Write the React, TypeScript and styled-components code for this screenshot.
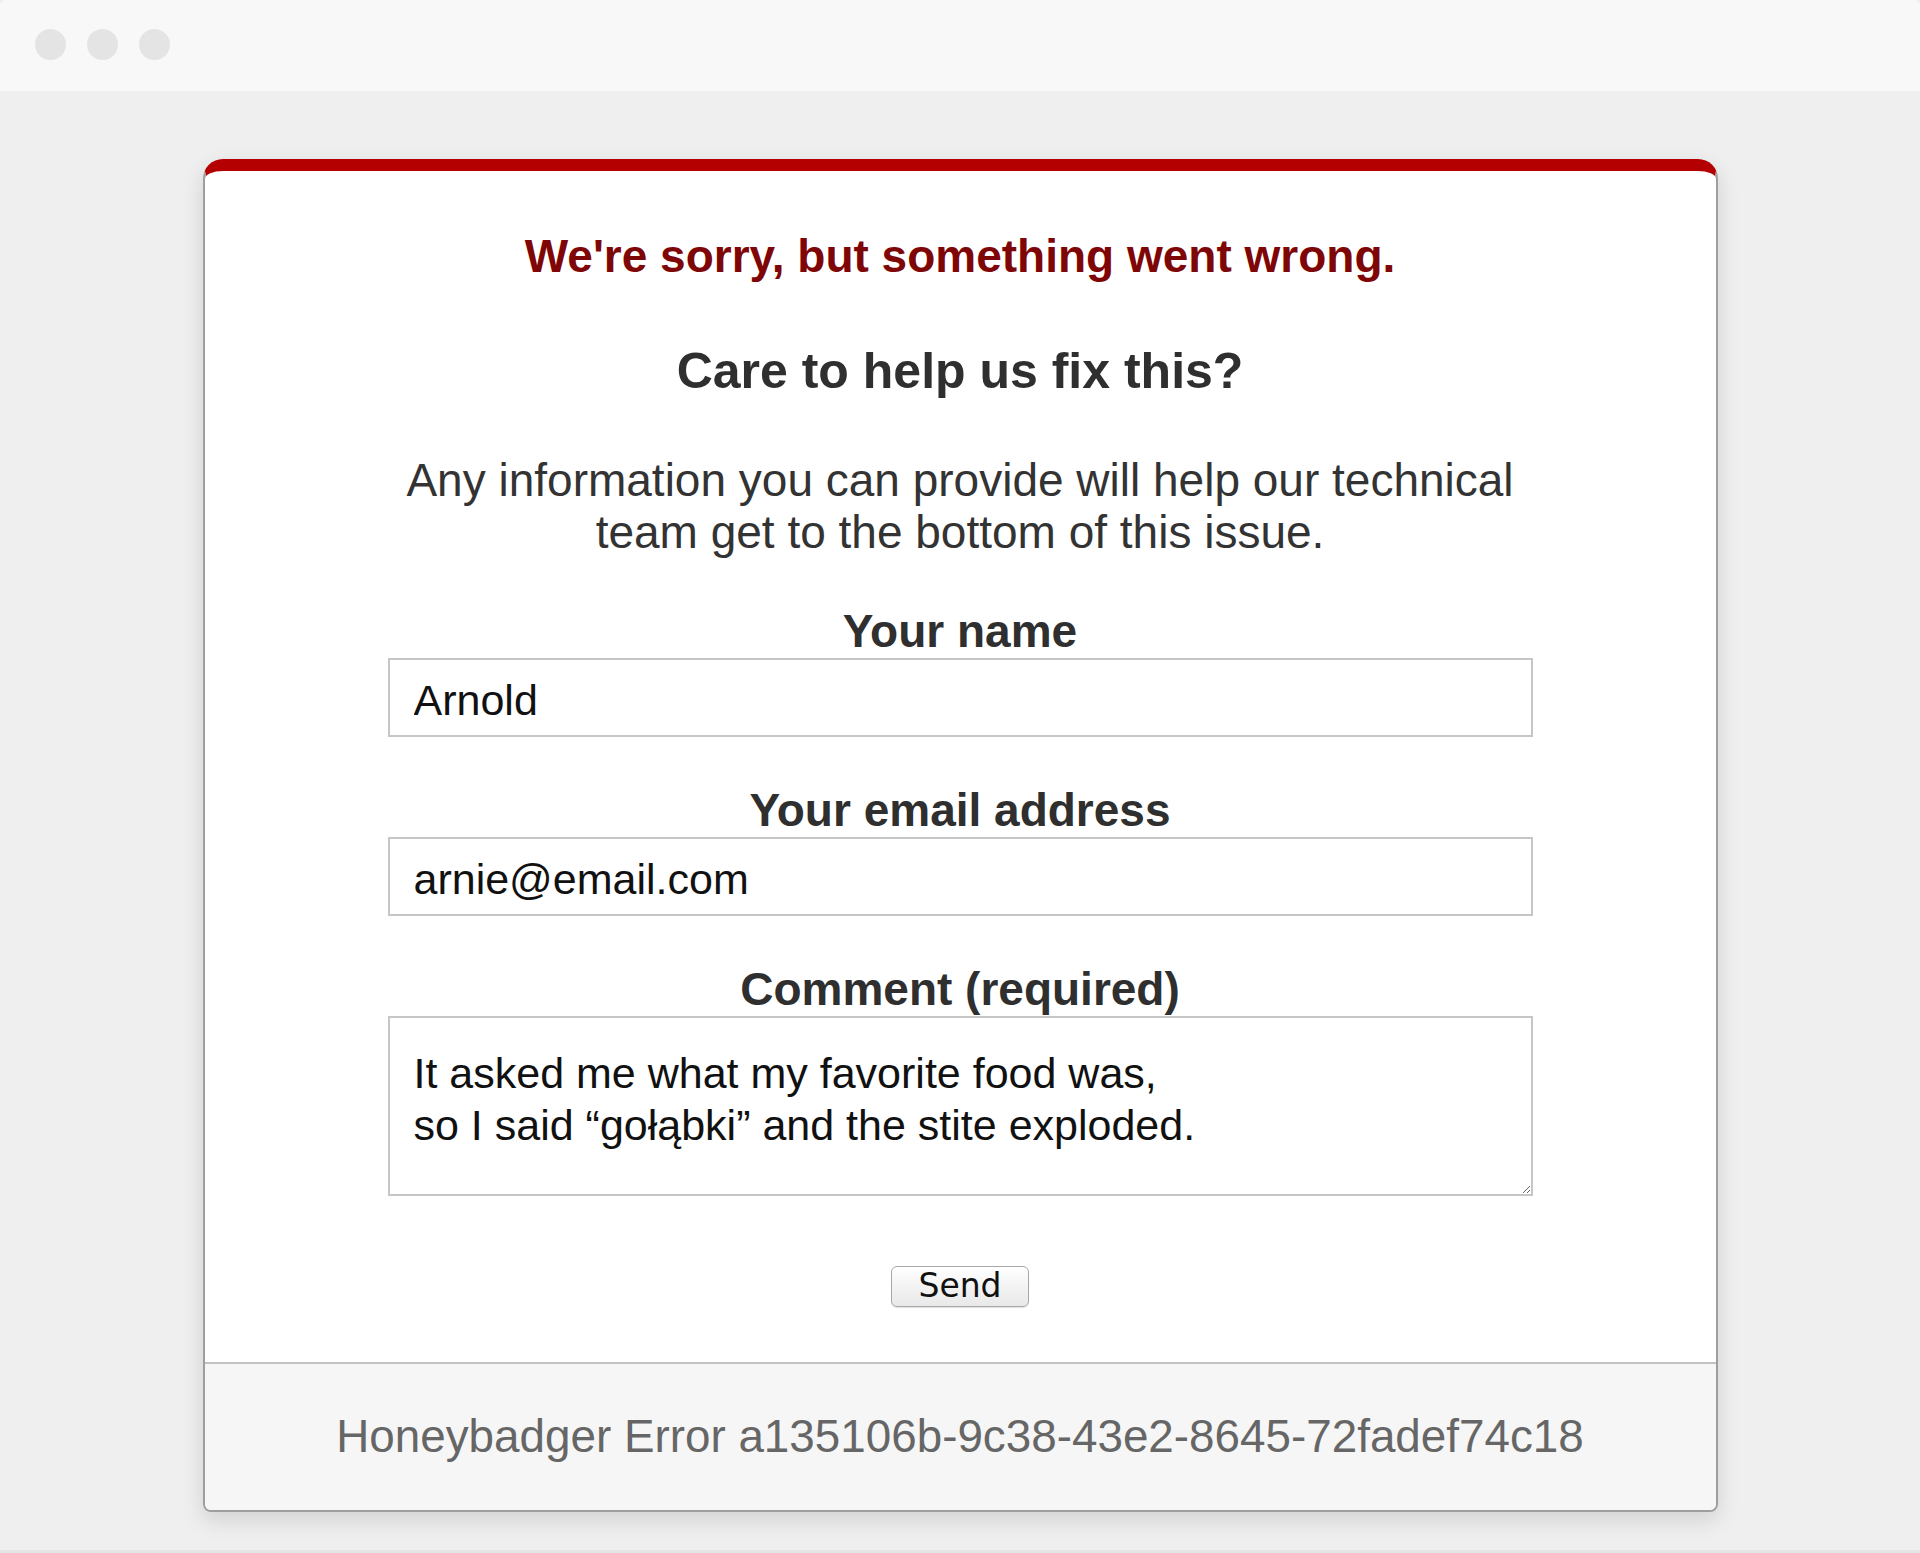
import React from "react";
import styled, { createGlobalStyle } from "styled-components";

const GlobalStyle = createGlobalStyle`
  html, body {
    margin: 0;
    padding: 0;
    background: #efefef;
  }
  * { box-sizing: border-box; }
`;

const Window = styled.div`
  min-height: 1553px;
  display: flex;
  flex-direction: column;
  font-family: "Liberation Sans", Arial, Helvetica, sans-serif;
`;

const TitleBar = styled.div`
  height: 91px;
  background: #f8f8f8;
  border-radius: 6px 6px 0 0;
  display: flex;
  align-items: center;
  gap: 21px;
  padding: 0 0 2px 35px;
`;

const Dot = styled.span`
  width: 31px;
  height: 31px;
  border-radius: 50%;
  background: #e4e4e4;
`;

const Viewport = styled.div`
  flex: 1;
  background: #efefef;
  padding: 68px 0 38px;
  border-bottom: 4px solid #e5e5e5;
`;

const Card = styled.div`
  width: 1515px;
  margin: 0 auto;
  background: #fff;
  border: 2px solid #9e9e9e;
  border-top: 12px solid #b40000;
  border-radius: 20px 20px 8px 8px;
  box-shadow: 0 8px 22px rgba(0, 0, 0, 0.13);
  overflow: hidden;
`;

const Body = styled.div`
  padding: 59px 0 55px;
  display: flex;
  flex-direction: column;
  align-items: center;
  text-align: center;
`;

const Title = styled.h1`
  margin: 0;
  font-size: 46px;
  line-height: 52px;
  font-weight: bold;
  color: #7f0606;
`;

const Subtitle = styled.h2`
  margin: 60.5px 0 0;
  font-size: 50px;
  line-height: 56px;
  font-weight: bold;
  color: #2f2f2f;
`;

const Lead = styled.p`
  margin: 55px 0 0;
  width: 1145px;
  font-size: 46px;
  line-height: 52px;
  color: #333;
`;

const Form = styled.form`
  width: 1145px;
  margin-top: 50px;
  display: flex;
  flex-direction: column;
  align-items: stretch;
`;

const Field = styled.div<{ $first?: boolean }>`
  display: flex;
  flex-direction: column;
  margin-top: ${(p) => (p.$first ? 0 : 50)}px;
`;

const Label = styled.label`
  font-size: 46px;
  line-height: 46px;
  font-weight: bold;
  color: #2f2f2f;
  margin-bottom: 4px;
`;

const Input = styled.input`
  height: 79px;
  width: 100%;
  border: 2px solid #c6c6c6;
  padding: 6px 24px 0;
  font-family: "Liberation Sans", Arial, Helvetica, sans-serif;
  font-size: 43px;
  color: #111;
  background: #fff;
  outline: none;
`;

const TextArea = styled.textarea`
  height: 180px;
  width: 100%;
  border: 2px solid #c6c6c6;
  padding: 29px 24px 20px;
  font-family: "Liberation Sans", Arial, Helvetica, sans-serif;
  font-size: 43px;
  line-height: 52px;
  color: #111;
  background: #fff;
  resize: vertical;
  outline: none;
`;

const ButtonRow = styled.div`
  display: flex;
  justify-content: center;
  margin-top: 70px;
`;

const SendButton = styled.button`
  height: 41px;
  padding: 0 26px;
  border: 1.5px solid #a8a8a8;
  border-radius: 6px;
  background: linear-gradient(#ffffff, #f1f1f1 60%, #e9e9e9);
  box-shadow: 0 1px 1px rgba(0, 0, 0, 0.12);
  font-family: "DejaVu Sans", Verdana, sans-serif;
  font-size: 33px;
  line-height: 38px;
  color: #111;
  cursor: pointer;
`;

const Footer = styled.div`
  height: 148px;
  border-top: 2px solid #c2c2c2;
  background: #f6f6f6;
  display: flex;
  align-items: center;
  justify-content: center;
  font-size: 45.8px;
  color: #666;
`;

export default function App() {
  return (
    <>
      <GlobalStyle />
      <Window>
        <TitleBar>
          <Dot />
          <Dot />
          <Dot />
        </TitleBar>
        <Viewport>
          <Card>
            <Body>
              <Title>We're sorry, but something went wrong.</Title>
              <Subtitle>Care to help us fix this?</Subtitle>
              <Lead>
                Any information you can provide will help our technical team
                get to the bottom of this issue.
              </Lead>
              <Form onSubmit={(e) => e.preventDefault()}>
                <Field $first>
                  <Label htmlFor="name">Your name</Label>
                  <Input id="name" type="text" defaultValue="Arnold" />
                </Field>
                <Field>
                  <Label htmlFor="email">Your email address</Label>
                  <Input id="email" type="email" defaultValue="arnie@email.com" />
                </Field>
                <Field>
                  <Label htmlFor="comment">Comment (required)</Label>
                  <TextArea
                    id="comment"
                    defaultValue={
                      "It asked me what my favorite food was,\nso I said \u201cgołąbki\u201d and the stite exploded."
                    }
                  />
                </Field>
                <ButtonRow>
                  <SendButton type="submit">Send</SendButton>
                </ButtonRow>
              </Form>
            </Body>
            <Footer>Honeybadger Error a135106b-9c38-43e2-8645-72fadef74c18</Footer>
          </Card>
        </Viewport>
      </Window>
    </>
  );
}
